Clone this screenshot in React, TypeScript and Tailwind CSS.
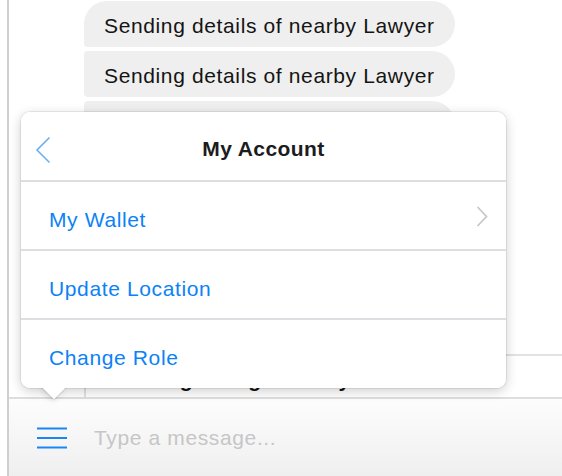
import React from 'react';

const font = { fontFamily: '"Liberation Sans", Arial, sans-serif' };

function Bubble({ first }: { first?: boolean }) {
    return (
        <div
            className={`ml-[75px] h-[46px] w-fit flex items-center px-5 pt-[3px] bg-[#efefef] text-[21px] tracking-[0.03em] text-[#141414] rounded-r-[23px] rounded-bl-[4px] ${
                first ? 'rounded-tl-[23px]' : 'rounded-tl-[4px]'
            }`}
        >
            Sending details of nearby Lawyer
        </div>
    );
}

function MenuRow({ label, chevron }: { label: string; chevron?: boolean }) {
    return (
        <div className="h-[67px] flex items-center justify-between pl-[28px] pr-[18px] pt-[8px]">
            <span className="text-[21px] tracking-[0.03em] text-[#0b82f7]">{label}</span>
            {chevron && (
                <svg width="12" height="21" viewBox="0 0 12 21" className="-mt-[6px]">
                    <path d="M1.5 1 L10.5 10.5 L1.5 20" fill="none" stroke="#c7c7cc" strokeWidth="1.8" />
                </svg>
            )}
        </div>
    );
}

export default function App() {
    return (
        <div className="relative w-[562px] h-[476px] overflow-hidden bg-white flex pl-[7px]" style={font}>
            {/* chat column */}
            <div className="flex-1 flex flex-col border-l-2 border-[#cfcfcf]">
                {/* messages */}
                <div className="flex-1 flex flex-col gap-[4px] pt-[1px] overflow-hidden">
                    <Bubble first />
                    <Bubble />
                    <Bubble />
                    <div className="mt-auto ml-[75px] h-[43px] border-t-2 border-l-2 border-[#e2e2e2] pl-5 pt-[12px] leading-[24px] text-[21px] font-bold tracking-[0.03em] text-[#141414] overflow-hidden">
                        Sending rating of Lawyer
                    </div>
                </div>

                {/* input bar */}
                <div className="h-[79px] flex items-center gap-[27px] pl-[28px] border-t-2 border-[#dedede] bg-gradient-to-b from-[#fdfdfd] to-[#efefef]">
                    <svg width="30" height="22" viewBox="0 0 30 22">
                        <path d="M0 1.5 H30 M0 11 H30 M0 20.5 H30" stroke="#1a86f5" strokeWidth="2" />
                    </svg>
                    <span className="text-[21px] tracking-[0.03em] text-[#c6c6c6]">Type a message...</span>
                </div>
            </div>

            {/* popover */}
            <div className="absolute z-10 left-[21px] top-[112px] w-[485px] h-[276px] rounded-[9px] bg-white shadow-[0_0_0_1px_rgba(0,0,0,0.07),0_3px_12px_rgba(0,0,0,0.2)]">
                <div className="absolute left-[25px] -bottom-[8px] w-[16px] h-[16px] rotate-45 bg-white shadow-[0_0_0_1px_rgba(0,0,0,0.07),0_2px_6px_rgba(0,0,0,0.15)]" />
                <div className="relative h-full rounded-[9px] bg-white overflow-hidden flex flex-col">
                    <div className="relative h-[70px] flex items-center justify-center pt-[6px] border-b-2 border-[#dedee2]">
                        <svg width="16" height="28" viewBox="0 0 16 28" className="absolute left-[14px] top-[24px]">
                            <path d="M14.5 1.5 L2 14 L14.5 26.5" fill="none" stroke="#6aaff5" strokeWidth="1.6" />
                        </svg>
                        <span className="text-[21px] font-bold tracking-[0.02em] text-[#1c1c1e]">My Account</span>
                    </div>
                    <div className="border-b-2 border-[#dedee2]">
                        <MenuRow label="My Wallet" chevron />
                    </div>
                    <div className="border-b-2 border-[#dedee2]">
                        <MenuRow label="Update Location" />
                    </div>
                    <MenuRow label="Change Role" />
                </div>
            </div>
        </div>
    );
}
